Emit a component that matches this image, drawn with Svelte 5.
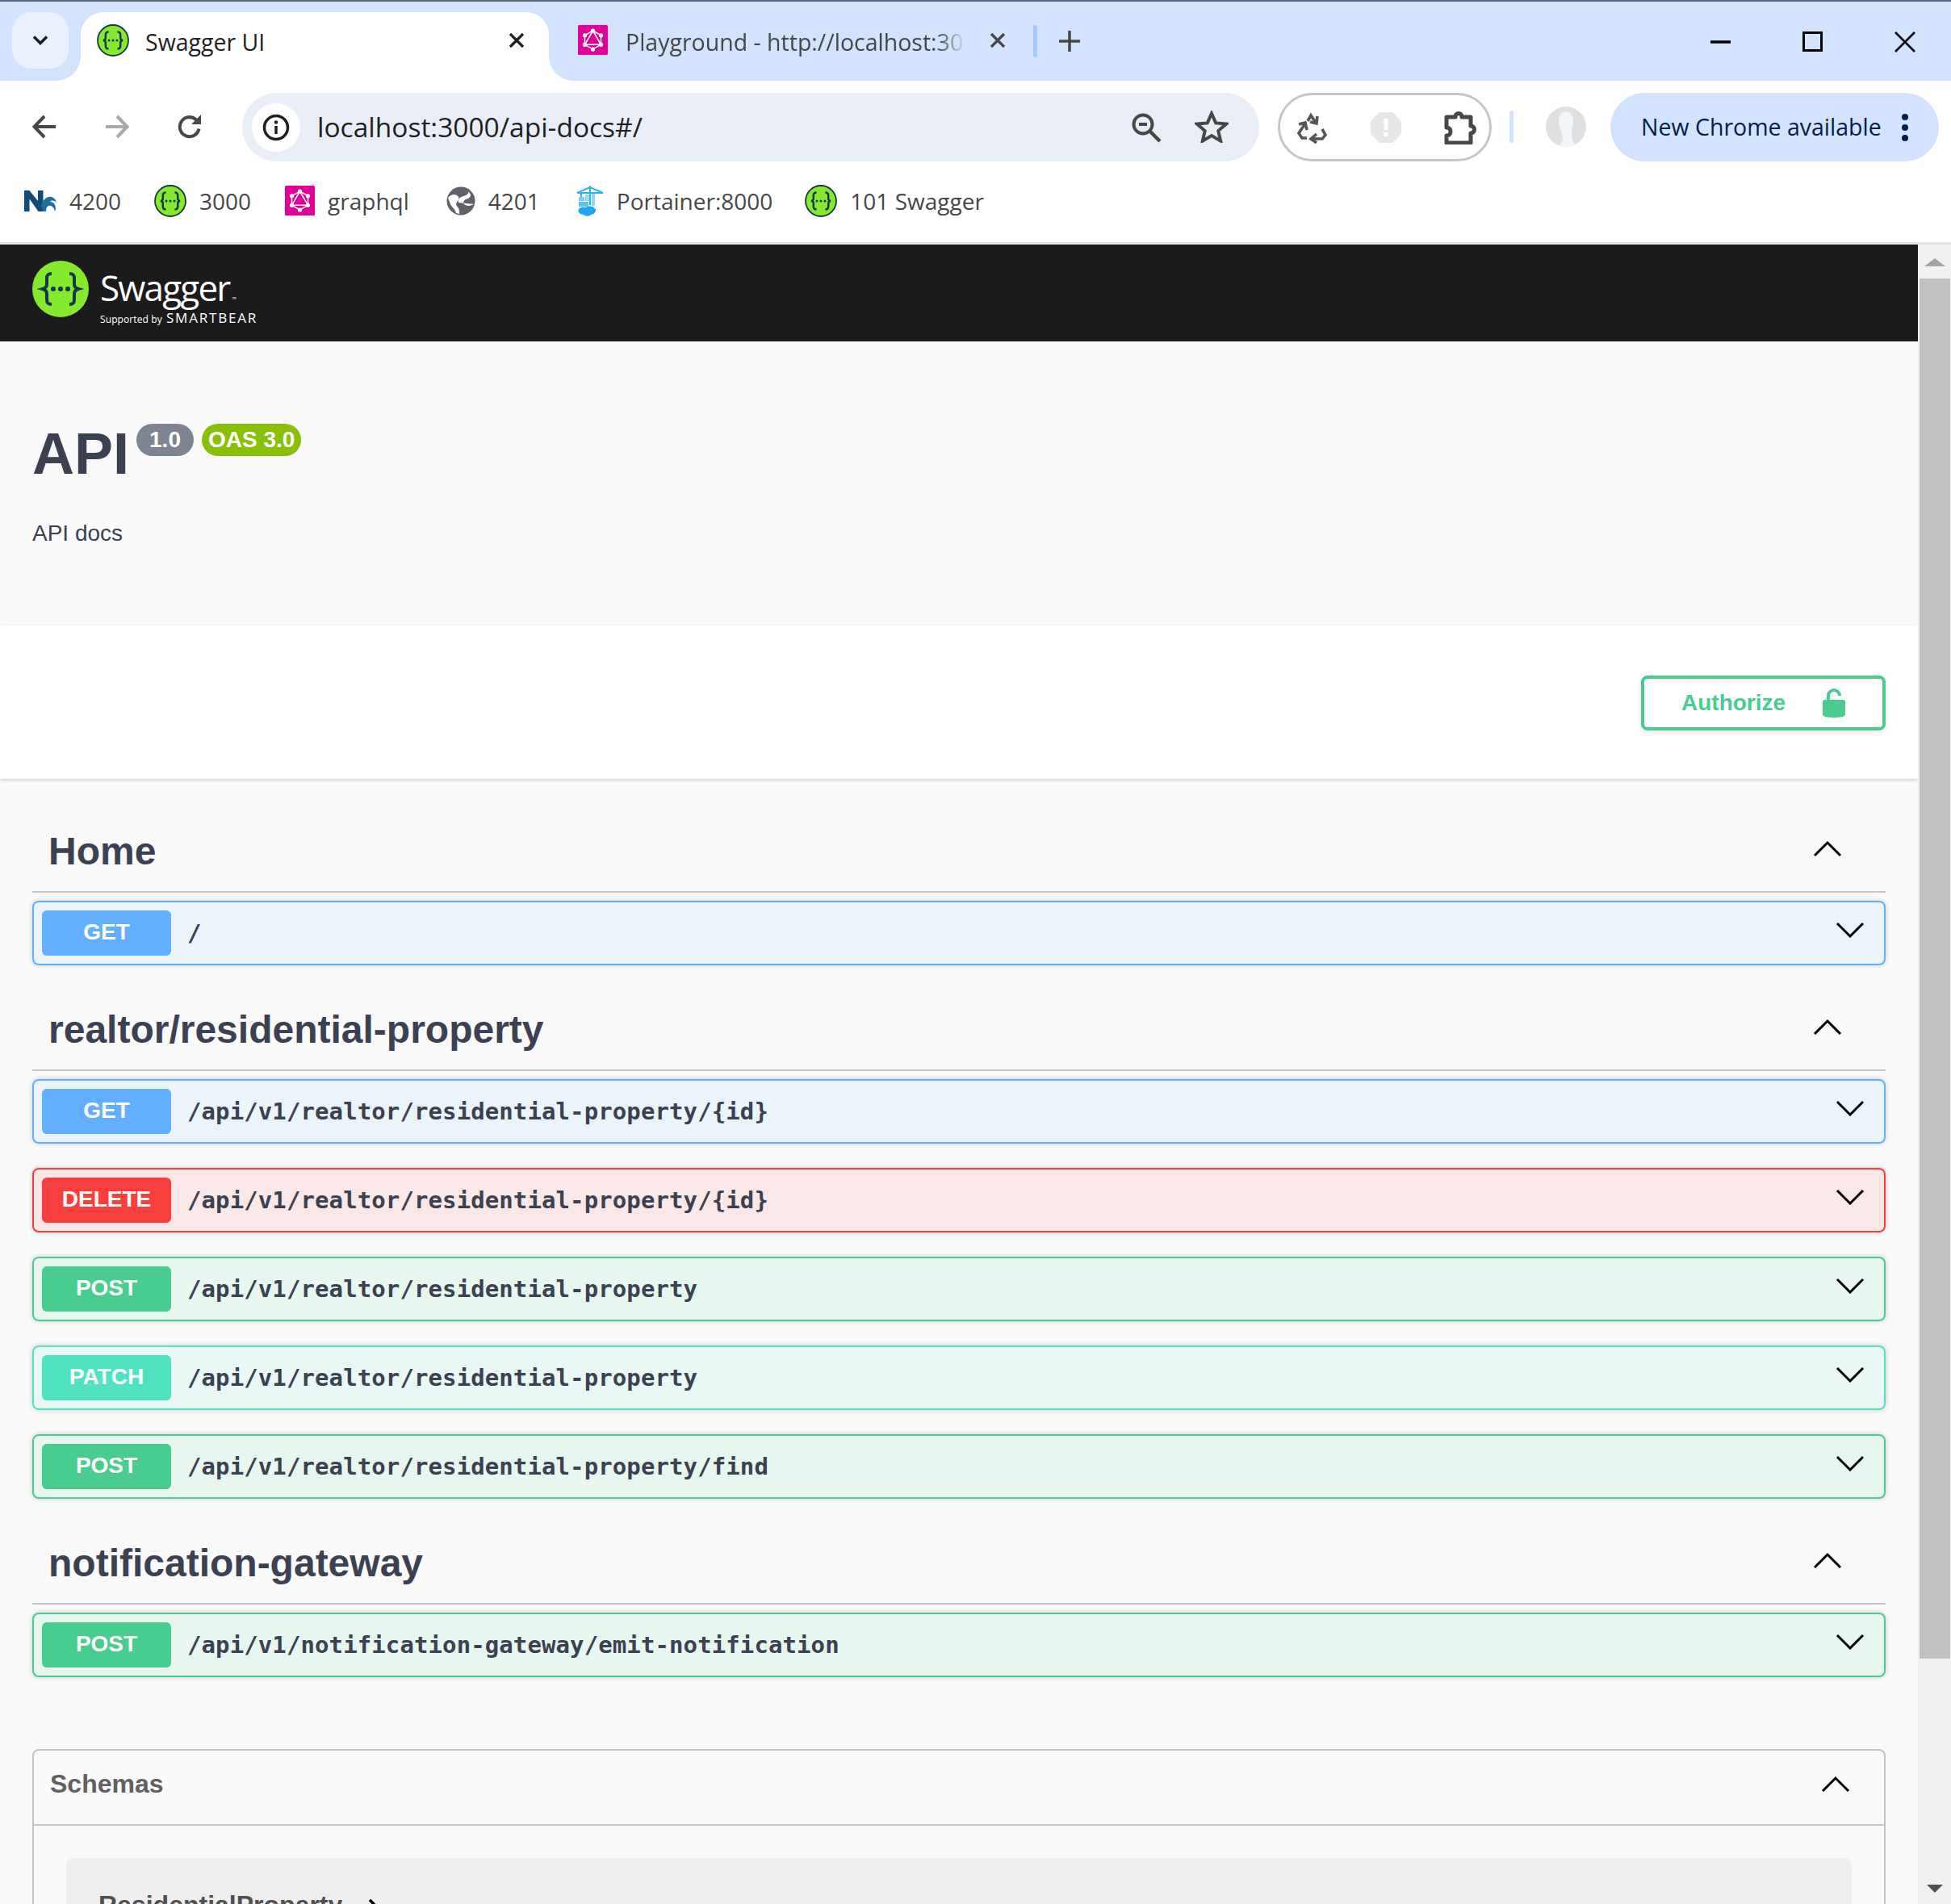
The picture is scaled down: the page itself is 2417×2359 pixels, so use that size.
<script>
    const bookmarks = [
        { icon: "nx", label: "4200", gap: 41 },
        { icon: "swagger", label: "3000", gap: 42 },
        { icon: "graphql", label: "graphql", gap: 46 },
        { icon: "globe", label: "4201", gap: 45 },
        { icon: "docker", label: "Portainer:8000", gap: 40 },
        { icon: "swagger", label: "101 Swagger", gap: 0 }
    ];

    const sections = [
        {
            name: "Home",
            ops: [{ method: "get", path: "/" }]
        },
        {
            name: "realtor/residential-property",
            ops: [
                { method: "get", path: "/api/v1/realtor/residential-property/{id}" },
                { method: "delete", path: "/api/v1/realtor/residential-property/{id}" },
                { method: "post", path: "/api/v1/realtor/residential-property" },
                { method: "patch", path: "/api/v1/realtor/residential-property" },
                { method: "post", path: "/api/v1/realtor/residential-property/find" }
            ]
        },
        {
            name: "notification-gateway",
            ops: [{ method: "post", path: "/api/v1/notification-gateway/emit-notification" }]
        }
    ];
</script>

{#snippet swagger(size)}
    <svg width={size} height={size} viewBox="0 0 40 40">
        <circle cx="20" cy="20" r="19" fill="#85ea2d" stroke="#173647" stroke-width="1.8"/>
        <path d="M14.5 9.500c-3 0-3.700 1.200-3.700 3.600v3.700c0 2-.9 3.200-3 3.200 2.100 0 3 1.200 3 3.200v3.700c0 2.400.7 3.600 3.700 3.600M25.500 9.500c3 0 3.700 1.200 3.700 3.600v3.700c0 2 .9 3.200 3 3.200-2.100 0-3 1.200-3 3.200v3.700c0 2.400-.7 3.600-3.700 3.600" fill="none" stroke="#173647" stroke-width="2.400"/>
        <circle cx="15" cy="20" r="1.500" fill="#173647"/>
        <circle cx="20" cy="20" r="1.500" fill="#173647"/>
        <circle cx="25" cy="20" r="1.500" fill="#173647"/>
    </svg>
{/snippet}

{#snippet graphql()}
    <svg width="37" height="37" viewBox="0 0 37 37">
        <rect width="37" height="37" rx="1.500" fill="#e10098"/>
        <path d="M18.500 7 28.500 12.800v11.500L18.500 30 8.500 24.300V12.800Z" fill="none" stroke="#fff" stroke-width="1.500"/>
        <path d="M18.500 7 28.500 24.300H8.500Z" fill="none" stroke="#fff" stroke-width="1.500"/>
        <g fill="#fff">
            <circle cx="18.500" cy="7" r="2.600"/><circle cx="28.500" cy="12.800" r="2.600"/>
            <circle cx="28.500" cy="24.300" r="2.600"/><circle cx="18.500" cy="30" r="2.600"/>
            <circle cx="8.500" cy="24.300" r="2.600"/><circle cx="8.500" cy="12.800" r="2.600"/>
        </g>
    </svg>
{/snippet}

{#snippet nx()}
    <svg width="40" height="30" viewBox="0 0 40 30">
        <path d="M0 2h6.500L17 15V2h6.500v26h-6L6.500 12.500V28H0Z" fill="#0f4a78"/>
        <path d="M21 22c1-9 9-15 15-11 2 1 3 3 4 6-3-3-6-3-8-1 4 0 7 3 7 9l-1 3c-1-5-4-8-8-7-2 1-3 3-3 7h-5l1-4Z" fill="#1f6f9f"/>
    </svg>
{/snippet}

{#snippet globe()}
    <svg width="36" height="36" viewBox="0 0 36 36">
        <circle cx="18" cy="18" r="17.500" fill="#5f6368"/>
        <path d="M2 14c5-6 11-4 13-1s-3 6-3 9 5 4 4 12l-4-1c-1-5-6-8-7-11ZM34 22c-5 3-10 2-12 0s0-5 2-6 6-1 6-6l-3-4c1 3-2 5-6 6s-7 4-6 8" fill="#fff" fill-rule="evenodd"/>
    </svg>
{/snippet}

{#snippet docker()}
    <svg width="34" height="38" viewBox="0 0 34 38">
        <path d="M17 0v24M1 9 17 2l16 7ZM6 9v6" fill="none" stroke="#2fb4ea" stroke-width="2"/>
        <rect x="3" y="14" width="7" height="5" fill="#7fcdee"/>
        <rect x="3" y="20" width="12" height="6" fill="#5cc3ea"/>
        <rect x="11" y="11" width="5" height="8" fill="#9adcf3"/>
        <rect x="19" y="10" width="4" height="15" fill="#8fd9f5"/>
        <path d="M3 29c2-3 7-3 9-2 3-2 9-2 10 1 2 0 3 3 1 5-1 3-5 2-6 4-3 1-6 1-8-1-4 0-8-3-6-7Z" fill="#1ea7f2"/>
    </svg>
{/snippet}

{#snippet chevron(up)}
    <svg class="chevron" width="36" height="20" viewBox="0 0 36 20">
        <path d={up ? "M2 19 18 3l16 16" : "M2 2l16 16L34 2"} fill="none" stroke="#000" stroke-width="3"/>
    </svg>
{/snippet}

<div class="app">
    <header class="chrome">
        <div class="tabstrip">
            <button class="tab-list">
                <svg width="20" height="14" viewBox="0 0 20 14"><path d="M2 2.500l8 8 8-8" fill="none" stroke="#1f1f1f" stroke-width="3.500"/></svg>
            </button>
            <div class="tab active">
                {@render swagger(40)}
                <span class="tab-title">Swagger UI</span>
                <svg class="tab-close" width="20" height="20" viewBox="0 0 20 20"><path d="M2 2l16 16M18 2 2 18" stroke="#1f1f1f" stroke-width="3.200"/></svg>
            </div>
            <div class="tab other">
                {@render graphql()}
                <span class="tab-title fade">Playground - http://localhost:30</span>
                <svg class="tab-close" width="20" height="20" viewBox="0 0 20 20"><path d="M2 2l16 16M18 2 2 18" stroke="#444746" stroke-width="3.200"/></svg>
            </div>
            <span class="tab-sep"></span>
            <svg class="new-tab" width="26" height="26" viewBox="0 0 26 26"><path d="M13 0v26M0 13h26" stroke="#444746" stroke-width="3.500"/></svg>
            <div class="win-controls">
                <svg width="26" height="4" viewBox="0 0 26 4"><path d="M0 2h25" stroke="#000" stroke-width="3.500"/></svg>
                <svg width="26" height="26" viewBox="0 0 26 26"><rect x="1.500" y="1.500" width="22" height="22" fill="none" stroke="#000" stroke-width="3"/></svg>
                <svg width="26" height="26" viewBox="0 0 26 26"><path d="M1 1l24 24M25 1 1 25" stroke="#000" stroke-width="2.500"/></svg>
            </div>
        </div>

        <div class="toolbar">
            <svg class="nav" width="30" height="30" viewBox="0 0 30 30"><path d="M29 15H4M15 2 2.500 15 15 28" fill="none" stroke="#474747" stroke-width="4"/></svg>
            <svg class="nav" width="30" height="30" viewBox="0 0 30 30"><path d="M1 15h25M15 2l12.500 13L15 28" fill="none" stroke="#a8a8a8" stroke-width="4"/></svg>
            <svg class="nav" width="30" height="30" viewBox="0 0 30 30"><path d="M26.500 17.500A12 12 0 1 1 22.500 6L27 10" fill="none" stroke="#474747" stroke-width="4"/><path d="M29 0v12H17Z" fill="#474747"/></svg>

            <div class="omnibox">
                <span class="site-info">
                    <svg width="34" height="34" viewBox="0 0 34 34"><circle cx="17" cy="17" r="14.500" fill="none" stroke="#1f1f1f" stroke-width="3.500"/><path d="M17 15v10" stroke="#1f1f1f" stroke-width="3.500"/><circle cx="17" cy="10.500" r="2.200" fill="#1f1f1f"/></svg>
                </span>
                <span class="url">localhost:3000/api-docs#/</span>
                <svg class="zoom-icon" width="38" height="38" viewBox="0 0 38 38"><circle cx="15" cy="15" r="11.500" fill="none" stroke="#474747" stroke-width="4"/><path d="M10 15h10" stroke="#474747" stroke-width="4"/><path d="M23.500 23.500 36 36" stroke="#474747" stroke-width="4.500"/></svg>
                <svg class="star" width="42" height="40" viewBox="0 0 42 40"><path d="M21 3.500l5.200 11.900 12.800 1.200-9.700 8.500 2.900 12.600L21 31.100 9.800 37.700l2.900-12.600L3 16.600l12.800-1.200Z" fill="none" stroke="#474747" stroke-width="4"/></svg>
            </div>

            <div class="extensions">
                <svg width="40" height="40" viewBox="0 0 40 40" fill="none" stroke="#565656" stroke-width="3.600">
                    <path d="M15 12 19 5l6 9M27 6l-1 9-8-2"/>
                    <path d="M12 15 4 27l4 6h6M4 16l8-2 2 9"/>
                    <path d="M33 22l4 7-4 5H20M26 28l-7 6 7 5"/>
                </svg>
                <svg width="38" height="38" viewBox="0 0 38 38"><path d="M11 0h16l11 11v16L27 38H11L0 27V11Z" fill="#e6e6e6"/><path d="M19 8v14" stroke="#fff" stroke-width="5"/><rect x="16.500" y="25" width="5" height="5" fill="#fff"/></svg>
                <svg width="44" height="42" viewBox="0 0 44 42"><path d="M4 8h11c0-6 8-6 8 0h11v11c6 0 6 9 0 9v12H4V31c3 0 5-2 5-5s-2-5-5-5Z" fill="#fff" stroke="#474747" stroke-width="5" stroke-linejoin="round"/></svg>
            </div>

            <span class="toolbar-sep"></span>

            <svg class="avatar" width="50" height="50" viewBox="0 0 50 50"><circle cx="25" cy="25" r="25" fill="#dfdfdf"/><path d="M16 18c0-16 18-16 18 0 0 8-3 12-2 20 0 4 4 7 4 9-6 4-16 4-20 2 2-3 6-5 5-12-2-6-5-12-5-19Z" fill="#f2f5f8"/></svg>

            <div class="update">
                <span>New Chrome available</span>
                <svg width="10" height="36" viewBox="0 0 10 36" fill="#041e49"><circle cx="5" cy="5" r="4"/><circle cx="5" cy="18" r="4"/><circle cx="5" cy="31" r="4"/></svg>
            </div>
        </div>

        <div class="bookmarks">
            {#each bookmarks as b}
                <div class="bookmark" style="margin-right: {b.gap}px">
                    {#if b.icon == "nx"}
                        {@render nx()}
                    {:else if b.icon == "swagger"}
                        {@render swagger(40)}
                    {:else if b.icon == "graphql"}
                        {@render graphql()}
                    {:else if b.icon == "globe"}
                        {@render globe()}
                    {:else}
                        {@render docker()}
                    {/if}
                    <span>{b.label}</span>
                </div>
            {/each}
        </div>
    </header>

    <div class="viewport">
        <main class="page">
            <div class="topbar">
                <svg width="70" height="70" viewBox="0 0 70 70">
                    <circle cx="35" cy="35" r="35" fill="#85ea2d"/>
                    <path d="M24 16c-5 0-6 2-6 6v7c0 3-1.500 5-5 6 3.500 1 5 3 5 6v7c0 4 1 6 6 6M46 16c5 0 6 2 6 6v7c0 3 1.500 5 5 6-3.500 1-5 3-5 6v7c0 4-1 6-6 6" fill="none" stroke="#173647" stroke-width="4"/>
                    <circle cx="26" cy="35" r="3" fill="#173647"/><circle cx="35" cy="35" r="3" fill="#173647"/><circle cx="44" cy="35" r="3" fill="#173647"/>
                </svg>
                <div class="brand">
                    <span class="brand-name">Swagger<small>™</small></span>
                    <span class="brand-sub">Supported by <b>SMARTBEAR</b></span>
                </div>
            </div>

            <section class="info">
                <h1>API<span class="ver">1.0</span><span class="ver oas">OAS 3.0</span></h1>
                <p>API docs</p>
            </section>

            <div class="scheme">
                <button class="authorize">
                    <span>Authorize</span>
                    <svg width="28" height="36" viewBox="0 0 28 36"><path d="M7 16V9a7 7 0 0 1 14 0" fill="none" stroke="#49cc90" stroke-width="4"/><path d="M0 17a3 3 0 0 1 3-3h22a3 3 0 0 1 3 3v15c0 3-5 4-14 4S0 35 0 32Z" fill="#49cc90"/></svg>
                </button>
            </div>

            <div class="ops">
                {#each sections as section}
                    <div class="tag">
                        <h3>{section.name}</h3>
                        {@render chevron(true)}
                    </div>
                    {#each section.ops as op}
                        <div class="opblock {op.method}">
                            <span class="method">{op.method.toUpperCase()}</span>
                            <span class="path">{op.path}</span>
                            {@render chevron(false)}
                        </div>
                    {/each}
                {/each}
            </div>

            <section class="schemas">
                <div class="schemas-head">
                    <h4>Schemas</h4>
                    {@render chevron(true)}
                </div>
                <div class="schemas-body">
                    <div class="model">
                        <span>ResidentialProperty</span>
                        <svg width="14" height="22" viewBox="0 0 14 22"><path d="M2 2l9 9-9 9" fill="none" stroke="#000" stroke-width="3.500"/></svg>
                    </div>
                </div>
            </section>
        </main>

        <div class="scrollbar">
            <span class="arrow-up"></span>
            <span class="thumb"></span>
            <span class="arrow-down"></span>
        </div>
    </div>
</div>

<style>
    :global(body)
    {
        margin: 0;
        background: #fff;
    }

    .app
    {
        width: 2417px;
        height: 2359px;
        overflow: hidden;
        display: flex;
        flex-direction: column;
        font-family: "Liberation Sans", Arial, sans-serif;
    }

    /* browser chrome */
    .chrome
    {
        font-family: "Open Sans", "Noto Sans", sans-serif;
        height: 303px;
        box-sizing: border-box;
        flex: none;
        background: #fff;
        border-bottom: 3px solid #e3e5e3;
    }

    .tabstrip
    {
        height: 100px;
        box-sizing: border-box;
        background: #d3e3fd;
        border-top: 2px solid #5c6478;
        padding-top: 13px;
        display: flex;
        align-items: flex-start;
    }

    .tab-list
    {
        width: 70px;
        height: 70px;
        margin-left: 15px;
        border: 0;
        padding: 0;
        border-radius: 24px;
        background: #e9f1fe;
        display: flex;
        align-items: center;
        justify-content: center;
    }

    .tab
    {
        height: 85px;
        box-sizing: border-box;
        display: flex;
        align-items: flex-start;
        padding-top: 15px;
        position: relative;
    }

    .tab.active
    {
        width: 580px;
        margin-left: 15px;
        padding-left: 20px;
        background: #fff;
        border-radius: 28px 28px 0 0;
    }

    .tab.active::before,
    .tab.active::after
    {
        content: "";
        position: absolute;
        bottom: 0;
        width: 30px;
        height: 30px;
    }

    .tab.active::before
    {
        left: -30px;
        background: radial-gradient(circle at 0 0, transparent 29.500px, #fff 30px);
    }

    .tab.active::after
    {
        right: -30px;
        background: radial-gradient(circle at 100% 0, transparent 29.500px, #fff 30px);
    }

    .tab.other
    {
        width: 530px;
        margin-left: 36px;
        padding-top: 16px;
    }

    .tab-title
    {
        font-size: 28.500px;
        line-height: 40px;
        padding-top: 2px;
        color: #1f1f1f;
        margin-left: 20px;
        white-space: nowrap;
    }

    .tab-title.fade
    {
        width: 420px;
        margin-left: 22px;
        padding-top: 1px;
        color: #444746;
        -webkit-mask-image: linear-gradient(90deg, #000 92%, transparent);
        mask-image: linear-gradient(90deg, #000 92%, transparent);
    }

    .tab-close
    {
        margin-top: 10px;
        margin-left: auto;
        margin-right: 30px;
    }

    .tab.other .tab-close
    {
        margin-right: 0;
        margin-left: 31px;
        margin-top: 9px;
    }

    .tab-sep
    {
        width: 5px;
        height: 40px;
        margin-left: 34px;
        margin-top: 16px;
        border-radius: 3px;
        background: #a8c7fa;
    }

    .new-tab
    {
        margin-left: 27px;
        margin-top: 23px;
    }

    .win-controls
    {
        margin-left: auto;
        margin-right: 44px;
        margin-top: 24px;
        display: flex;
        align-items: center;
        gap: 88px;
    }

    .toolbar
    {
        height: 115px;
        box-sizing: border-box;
        padding-top: 15px;
        padding-left: 40px;
        background: #fff;
        border-radius: 22px 22px 0 0;
        margin-bottom: -14px;
        display: flex;
        align-items: flex-start;
        position: relative;
    }

    .nav
    {
        margin-top: 27px;
        margin-right: 60px;
    }

    .nav:nth-of-type(3)
    {
        margin-right: 50px;
    }

    .omnibox
    {
        width: 1260px;
        height: 85px;
        box-sizing: border-box;
        border-radius: 43px;
        background: #e9eef6;
        padding-left: 12px;
        padding-right: 38px;
        display: flex;
        align-items: center;
    }

    .site-info
    {
        width: 60px;
        height: 60px;
        border-radius: 30px;
        background: #fff;
        display: flex;
        align-items: center;
        justify-content: center;
    }

    .url
    {
        font-size: 33.500px;
        color: #1f1f1f;
        margin-left: 21px;
        padding-bottom: 2px;
        flex: 1;
        white-space: nowrap;
    }

    .zoom-icon
    {
        margin-right: 41px;
    }

    .star
    {
        margin-top: -2px;
    }

    .extensions
    {
        width: 265px;
        height: 85px;
        box-sizing: border-box;
        margin-left: 23px;
        border: 3px solid #c4c7c5;
        border-radius: 43px;
        padding: 0 13px 0 19px;
        display: flex;
        align-items: center;
        justify-content: space-between;
    }

    .toolbar-sep
    {
        width: 5px;
        height: 40px;
        margin: 22px 0 0 22px;
        border-radius: 3px;
        background: #d3e3fd;
    }

    .avatar
    {
        margin: 17px 0 0 40px;
    }

    .update
    {
        width: 407px;
        height: 85px;
        box-sizing: border-box;
        margin-left: 30px;
        padding: 0 37px 0 38px;
        border-radius: 43px;
        background: #d3e3fd;
        color: #041e49;
        font-size: 28.500px;
        display: flex;
        align-items: center;
        justify-content: space-between;
    }

    .update span
    {
        padding-bottom: 2px;
    }

    .bookmarks
    {
        height: 90px;
        padding-left: 30px;
        padding-top: 5px;
        box-sizing: border-box;
        display: flex;
        align-items: center;
    }

    .bookmark
    {
        display: flex;
        align-items: center;
        gap: 16px;
        font-size: 28px;
        color: #444746;
    }

    /* page */
    .viewport
    {
        flex: 1;
        min-height: 0;
        display: flex;
    }

    .page
    {
        flex: 1;
        min-width: 0;
        background: #fafafa;
        color: #3b4151;
    }

    .topbar
    {
        height: 120px;
        box-sizing: border-box;
        background: #1b1b1b;
        padding: 20px 40px 0;
        display: flex;
        align-items: flex-start;
        gap: 14px;
        color: #fff;
        font-family: "Open Sans", sans-serif;
    }

    .brand
    {
        display: flex;
        flex-direction: column;
        margin-top: 4px;
    }

    .brand-name
    {
        font-size: 44px;
        line-height: 58px;
        font-weight: 400;
        letter-spacing: -1.800px;
    }

    .brand-name small
    {
        font-size: 7px;
        line-height: 0;
        letter-spacing: 0;
        margin-left: 3px;
    }

    .brand-sub
    {
        font-size: 12px;
        line-height: 18px;
        letter-spacing: 0.100px;
        white-space: nowrap;
    }

    .brand-sub b
    {
        font-size: 17px;
        font-weight: 400;
        letter-spacing: 1.800px;
        margin-left: 2px;
    }

    .info
    {
        height: 352px;
        box-sizing: border-box;
        padding: 100px 40px 0;
    }

    .info h1
    {
        margin: 0;
        font-size: 72px;
        line-height: 78px;
        font-weight: 700;
        white-space: nowrap;
    }

    .ver
    {
        display: inline-block;
        vertical-align: top;
        margin-left: 9px;
        margin-top: 2px;
        height: 40px;
        padding: 0 16px;
        border-radius: 20px;
        background: #7d8492;
        color: #fff;
        font-size: 28px;
        line-height: 40px;
    }

    .ver.oas
    {
        margin-left: 10px;
        padding: 0 8px;
        background: #89bf04;
    }

    .info p
    {
        margin: 40px 0 0;
        font-size: 28px;
        line-height: 40px;
    }

    .scheme
    {
        height: 190px;
        box-sizing: border-box;
        background: #fff;
        box-shadow: 0 2px 4px rgba(0, 0, 0, 0.15);
        padding: 62px 40px 0;
        display: flex;
        justify-content: flex-end;
        align-items: flex-start;
    }

    .authorize
    {
        width: 303px;
        height: 68px;
        box-sizing: border-box;
        padding: 0 46px;
        border: 4px solid #49cc90;
        border-radius: 8px;
        background: #fff;
        box-shadow: 0 2px 6px rgba(0, 0, 0, 0.1);
        color: #49cc90;
        font-family: inherit;
        font-size: 28px;
        font-weight: 700;
        display: flex;
        align-items: center;
        justify-content: space-between;
    }

    .ops
    {
        padding: 40px 40px 0;
    }

    .tag
    {
        height: 101px;
        box-sizing: border-box;
        margin-bottom: 10px;
        padding: 0 54px 0 20px;
        border-bottom: 2px solid #c4c5ca;
        display: flex;
        align-items: center;
        justify-content: space-between;
    }

    .tag h3
    {
        margin: 0;
        font-size: 48px;
        font-weight: 700;
        line-height: 60px;
    }

    .chevron
    {
        margin-bottom: 8px;
    }

    .opblock
    {
        height: 80px;
        box-sizing: border-box;
        margin-bottom: 30px;
        padding: 0 24px 0 10px;
        border: 2px solid;
        border-radius: 8px;
        box-shadow: 0 0 6px rgba(0, 0, 0, 0.19);
        display: flex;
        align-items: center;
    }

    .method
    {
        width: 160px;
        height: 56px;
        flex: none;
        border-radius: 6px;
        color: #fff;
        font-size: 28px;
        font-weight: 700;
        line-height: 54px;
        text-align: center;
    }

    .path
    {
        flex: 1;
        padding-left: 20px;
        color: #3b4151;
        font-family: "DejaVu Sans Mono", monospace;
        font-size: 29px;
        font-weight: 600;
        letter-spacing: 0.100px;
    }

    .get { background: #ebf3fb; border-color: #61affe; }
    .get .method { background: #61affe; }
    .delete { background: #fae7e7; border-color: #f93e3e; }
    .delete .method { background: #f93e3e; }
    .post { background: #e8f6f0; border-color: #49cc90; }
    .post .method { background: #49cc90; }
    .patch { background: #e9f8f5; border-color: #50e3c2; }
    .patch .method { background: #50e3c2; }

    .schemas
    {
        margin: 89px 40px 0;
        border: 2px solid #c4c5ca;
        border-bottom: 0;
        border-radius: 8px 8px 0 0;
    }

    .schemas-head
    {
        height: 93px;
        box-sizing: border-box;
        padding: 0 42px 0 20px;
        border-bottom: 2px solid #c4c5ca;
        display: flex;
        align-items: center;
        justify-content: space-between;
    }

    .schemas-head h4
    {
        margin: 0 0 9px;
        font-size: 32px;
        font-weight: 700;
        color: #606060;
    }

    .schemas-head .chevron
    {
        margin-bottom: 9px;
    }

    .schemas-body
    {
        padding: 40px 40px 0;
    }

    .model
    {
        height: 200px;
        box-sizing: border-box;
        padding: 40px 40px 0;
        border-radius: 8px;
        background: #eee;
        color: #505050;
        font-size: 32px;
        font-weight: 700;
        display: flex;
        align-items: flex-start;
        gap: 32px;
    }

    .model svg
    {
        margin-top: 10px;
    }

    .scrollbar
    {
        width: 41px;
        flex: none;
        background: #f1f1f1;
        display: flex;
        flex-direction: column;
        align-items: center;
    }

    .arrow-up
    {
        margin-top: 17px;
        border: 13px solid transparent;
        border-top: 0;
        border-bottom: 10px solid #a3a3a3;
    }

    .thumb
    {
        width: 38px;
        height: 1710px;
        margin-top: 15px;
        background: #c1c1c1;
    }

    .arrow-down
    {
        margin-top: auto;
        margin-bottom: 14px;
        border: 10px solid transparent;
        border-bottom: 0;
        border-top: 10px solid #505050;
    }
</style>
